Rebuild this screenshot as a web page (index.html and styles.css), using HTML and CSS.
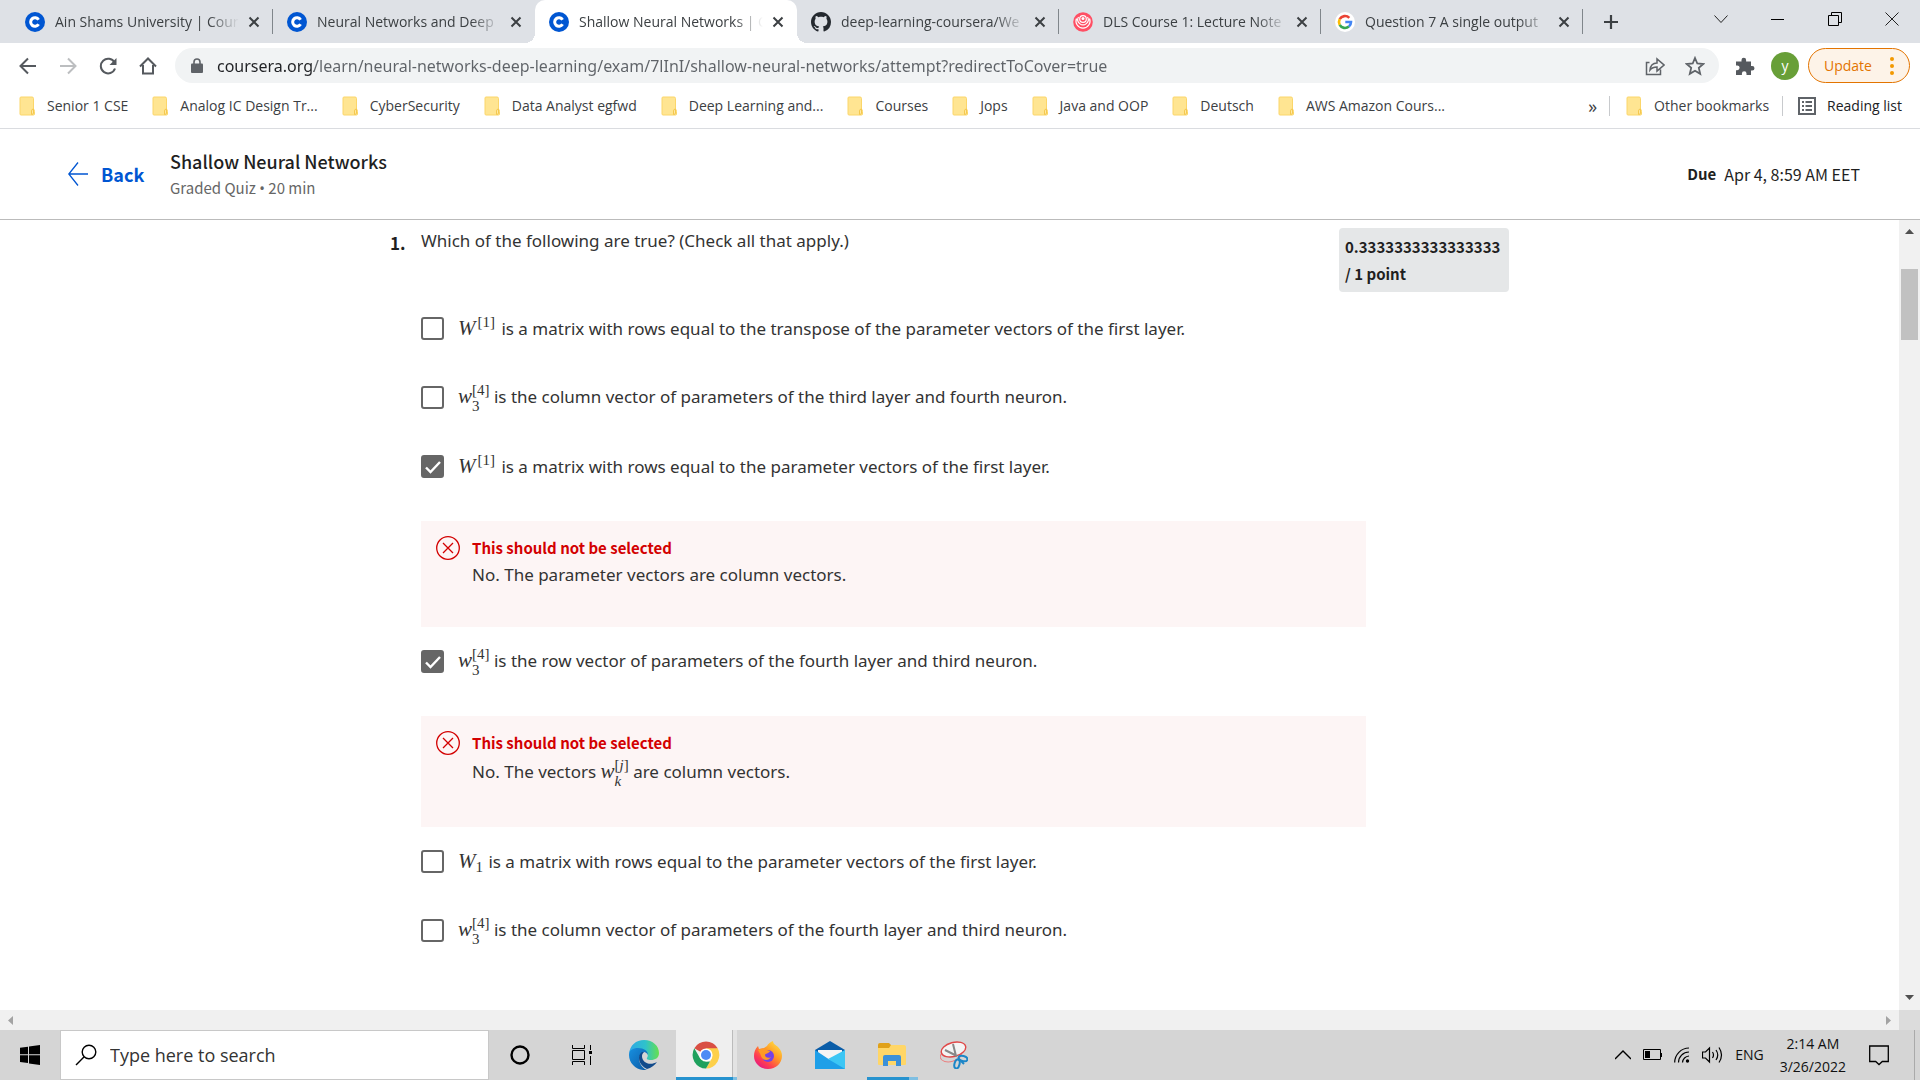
FILE: index.html
```html
<!DOCTYPE html>
<html lang="en">
<head>
<meta charset="utf-8">
<title>Shallow Neural Networks | Coursera</title>
<link rel="stylesheet" href="styles.css">
</head>
<body>
<svg class="defs" aria-hidden="true">
  <symbol id="coursera" viewBox="0 0 20 20"><circle cx="10" cy="10" r="10" fill="#0056d2"/><path d="M13.6 7.7A4.3 4.3 0 1 0 13.6 12.3" fill="none" stroke="#fff" stroke-width="3"/></symbol>
  <symbol id="close" viewBox="0 0 12 12"><path d="M1.5 1.5l9 9M10.500 1.500l-9 9" stroke="#3c4043" stroke-width="2" fill="none"/></symbol>
  <symbol id="folder" viewBox="0 0 16 20"><path d="M1 2q0-1 1-1h11q1.500 0 1.500 1.500V13q1 1 1 2.500v2.500q0 1-1 1H2q-1 0-1-1z" fill="#ffe592" stroke="#fbd66a"/><path d="M12.500 18.500v-3.500q0-2 2-2v4q0 1.500-2 1.500z" fill="#ffeaa5" stroke="#f5c84e"/></symbol>
  <symbol id="wrong" viewBox="0 0 24 24"><circle cx="12" cy="12" r="11.300" fill="none" stroke="#d30001" stroke-width="1.300"/><path d="M7 7l10 10M17 7L7 17" stroke="#d30001" stroke-width="1.300"/></symbol>
</svg>

<header class="browser">
  <nav class="tabs" aria-label="Tabs">
    <div class="tab"><svg class="fav"><use href="#coursera"/></svg><span class="tab-title">Ain Shams University | Cour</span><button class="tab-close" aria-label="Close tab"><svg><use href="#close"/></svg></button></div>
    <div class="tab no-line"><svg class="fav"><use href="#coursera"/></svg><span class="tab-title">Neural Networks and Deep</span><button class="tab-close" aria-label="Close tab"><svg><use href="#close"/></svg></button></div>
    <div class="tab active"><svg class="fav"><use href="#coursera"/></svg><span class="tab-title">Shallow Neural Networks | C</span><button class="tab-close" aria-label="Close tab"><svg><use href="#close"/></svg></button></div>
    <div class="tab"><svg class="fav" viewBox="0 0 16 16"><path fill="#24292f" d="M8 0C3.580 0 0 3.580 0 8c0 3.540 2.290 6.530 5.470 7.590.4.070.550-.170.550-.380 0-.190-.010-.820-.010-1.490-2.010.370-2.530-.490-2.690-.940-.090-.230-.480-.940-.820-1.130-.280-.150-.680-.520-.010-.530.630-.010 1.080.580 1.230.820.720 1.210 1.870.870 2.330.660.070-.520.280-.870.510-1.070-1.780-.200-3.640-.890-3.640-3.950 0-.870.310-1.590.820-2.150-.080-.200-.360-1.020.080-2.120 0 0 .670-.210 2.200.820.640-.180 1.320-.270 2-.270s1.360.090 2 .270c1.530-1.040 2.200-.820 2.200-.820.440 1.100.160 1.920.080 2.120.510.560.820 1.270.820 2.150 0 3.070-1.870 3.750-3.650 3.950.290.250.540.730.540 1.480 0 1.070-.010 1.930-.010 2.200 0 .210.150.460.550.380A8 8 0 0 0 16 8c0-4.420-3.580-8-8-8z"/></svg><span class="tab-title">deep-learning-coursera/We</span><button class="tab-close" aria-label="Close tab"><svg><use href="#close"/></svg></button></div>
    <div class="tab"><svg class="fav" viewBox="0 0 20 20"><circle cx="10" cy="10" r="9.800" fill="#ff4f64"/><g fill="none" stroke="#fff" stroke-width="1.200"><path d="M3.500 6.500a7 7 0 1 0 13 0"/><path d="M5.500 5a5.200 5.200 0 1 0 9 0"/><circle cx="10" cy="7" r="3.300"/></g><circle cx="10" cy="6.500" r="1.500" fill="#fff"/></svg><span class="tab-title">DLS Course 1: Lecture Note</span><button class="tab-close" aria-label="Close tab"><svg><use href="#close"/></svg></button></div>
    <div class="tab"><svg class="fav" viewBox="0 0 20 20"><circle cx="10" cy="10" r="10" fill="#fff"/><g fill="none" stroke-width="2.600"><path d="M14.300 5.900A6 6 0 0 0 4.700 7.200" stroke="#ea4335"/><path d="M4.700 7.200a6 6 0 0 0 0 5.600" stroke="#fbbc05"/><path d="M4.700 12.800a6 6 0 0 0 9.200 1.700" stroke="#34a853"/><path d="M13.900 14.500A6 6 0 0 0 16 10H10.300" stroke="#4285f4"/></g></svg><span class="tab-title">Question 7 A single output</span><button class="tab-close" aria-label="Close tab"><svg><use href="#close"/></svg></button></div>
    <button class="new-tab" aria-label="New tab"><svg width="16" height="16" viewBox="0 0 16 16"><path d="M8 1v14M1 8h14" stroke="#3c4043" stroke-width="2.200"/></svg></button>
    <div class="window-controls">
      <button aria-label="Search tabs"><svg width="14" height="14" viewBox="0 0 14 14"><path d="M.5 3.500L7 10.500l6.500-7" fill="none" stroke="#222"/></svg></button>
      <button aria-label="Minimize"><svg width="14" height="14" viewBox="0 0 14 14"><path d="M0 7.500h13" stroke="#000"/></svg></button>
      <button aria-label="Restore"><svg width="14" height="14" viewBox="0 0 14 14"><path d="M.5 3.500h10v10H.5zM3.500 3.500v-3h10v10h-3" fill="none" stroke="#000"/></svg></button>
      <button aria-label="Close window"><svg width="14" height="14" viewBox="0 0 14 14"><path d="M.5.500l13 13M13.500.500l-13 13" stroke="#222"/></svg></button>
    </div>
  </nav>

  <div class="toolbar">
    <button class="tool" aria-label="Back"><svg width="18" height="18" viewBox="0 0 18 18"><path d="M17 9H2M9 1.500L1.500 9 9 16.500" fill="none" stroke="#55595e" stroke-width="2"/></svg></button>
    <button class="tool" aria-label="Forward"><svg width="18" height="18" viewBox="0 0 18 18"><path d="M1 9h15M9 1.500L16.500 9 9 16.500" fill="none" stroke="#bcbec0" stroke-width="2"/></svg></button>
    <button class="tool" aria-label="Reload"><svg width="18" height="18" viewBox="0 0 18 18"><path d="M15.500 5.500A7.300 7.300 0 1 0 16 11.500" fill="none" stroke="#55595e" stroke-width="2"/><path d="M17.500 1v7h-7z" fill="#55595e"/></svg></button>
    <button class="tool" aria-label="Home"><svg width="18" height="18" viewBox="0 0 18 18"><path d="M1 9.500L9 1.500l8 8M4 8v8.500h10V8" fill="none" stroke="#55595e" stroke-width="2"/></svg></button>
    <div class="omnibox">
      <svg width="12" height="16" viewBox="0 0 12 16"><rect x="0" y="5.500" width="12" height="9.500" rx="1" fill="#5f6368"/><path d="M3 6V4a3 3 0 0 1 6 0v2" fill="none" stroke="#5f6368" stroke-width="1.600"/></svg>
      <input class="url" type="text" aria-label="Address" value="coursera.org/learn/neural-networks-deep-learning/exam/7lInI/shallow-neural-networks/attempt?redirectToCover=true">
      <button aria-label="Share"><svg width="20" height="20" viewBox="0 0 20 20"><path d="M4.500 6.500H1.500v12h14v-5M5 14c.5-5 3-7 7-7V3l7 6-7 6v-4c-3 0-5 .5-7 3z" fill="none" stroke="#5f6368" stroke-width="1.500"/></svg></button>
      <button aria-label="Bookmark"><svg width="20" height="20" viewBox="0 0 20 20"><path d="M10 2l2.300 5.500 6 .5-4.500 3.900 1.400 5.900L10 14.700l-5.200 3.100 1.400-5.900L1.700 8l6-.5z" fill="none" stroke="#5f6368" stroke-width="1.800"/></svg></button>
    </div>
    <button class="tool ext" aria-label="Extensions"><svg width="20" height="20" viewBox="0 0 20 20"><path d="M1 5.500h5.500V4a2.300 2.300 0 0 1 4.600 0v1.500H16V10h1.200a2.300 2.300 0 0 1 0 4.600H16V19h-4.500v-1.500a2.300 2.300 0 0 0-4.600 0V19H1v-4.800h1.200a2.400 2.400 0 0 0 0-4.800H1z" fill="#55595e"/></svg></button>
    <button class="avatar" aria-label="Profile">y</button>
    <button class="update">Update <svg width="4" height="20" viewBox="0 0 4 20"><g fill="#f29900"><circle cx="2" cy="3" r="2"/><circle cx="2" cy="10" r="2"/><circle cx="2" cy="17" r="2"/></g></svg></button>
  </div>

  <nav class="bookmarks" aria-label="Bookmarks">
    <a href="#"><svg><use href="#folder"/></svg>Senior 1 CSE</a>
    <a href="#"><svg><use href="#folder"/></svg>Analog IC Design Tr...</a>
    <a href="#"><svg><use href="#folder"/></svg>CyberSecurity</a>
    <a href="#"><svg><use href="#folder"/></svg>Data Analyst egfwd</a>
    <a href="#"><svg><use href="#folder"/></svg>Deep Learning and...</a>
    <a href="#"><svg><use href="#folder"/></svg>Courses</a>
    <a href="#"><svg><use href="#folder"/></svg>Jops</a>
    <a href="#"><svg><use href="#folder"/></svg>Java and OOP</a>
    <a href="#"><svg><use href="#folder"/></svg>Deutsch</a>
    <a href="#"><svg><use href="#folder"/></svg>AWS Amazon Cours...</a>
    <button class="more" aria-label="More bookmarks">»</button>
    <a class="side" href="#"><svg><use href="#folder"/></svg>Other bookmarks</a>
    <a class="side list" href="#"><svg viewBox="0 0 18 20"><rect x="1" y="2" width="16" height="16" fill="none" stroke="#5f6368" stroke-width="2"/><path d="M4 6h2M4 10h2M4 14h2M7.500 6H14M7.500 10H14M7.500 14H14" stroke="#5f6368" stroke-width="2"/></svg>Reading list</a>
  </nav>
</header>

<header class="quiz-header">
  <a class="back" href="#"><svg width="20" height="24" viewBox="0 0 20 24"><path d="M20 12H1M10 .5L.8 12l9.200 11.500" fill="none" stroke="#0056d2" stroke-width="1.300"/></svg>Back</a>
  <div class="quiz-name">
    <h1>Shallow Neural Networks</h1>
    <p>Graded Quiz <span class="dot">•</span> 20 min</p>
  </div>
  <p class="due"><b>Due</b>Apr 4, 8:59 AM EET</p>
</header>

<div class="viewport">
  <main class="quiz">
    <div class="question">
      <span class="number">1.</span>
      <h2>Which of the following are true? (Check all that apply.)</h2>
      <p class="score">0.3333333333333333<br>/ 1 point</p>
    </div>
    <div class="options">
      <label class="option"><input type="checkbox"><span><i class="var">W</i><sup>[1]</sup> is a matrix with rows equal to the transpose of the parameter vectors of the first layer.</span></label>
      <label class="option"><input type="checkbox"><span><i class="var">w</i><span class="stack"><span>[4]</span><span>3</span></span> is the column vector of parameters of the third layer and fourth neuron.</span></label>
      <label class="option"><input type="checkbox" checked><span><i class="var">W</i><sup>[1]</sup> is a matrix with rows equal to the parameter vectors of the first layer.</span></label>
      <section class="feedback">
        <svg width="24" height="24"><use href="#wrong"/></svg>
        <div><h3>This should not be selected</h3><p>No. The parameter vectors are column vectors.</p></div>
      </section>
      <label class="option"><input type="checkbox" checked><span><i class="var">w</i><span class="stack"><span>[4]</span><span>3</span></span> is the row vector of parameters of the fourth layer and third neuron.</span></label>
      <section class="feedback">
        <svg width="24" height="24"><use href="#wrong"/></svg>
        <div><h3>This should not be selected</h3><p class="tall">No. The vectors <i class="var">w</i><span class="stack"><span>[<i>j</i>]</span><i>k</i></span> are column vectors.</p></div>
      </section>
      <label class="option"><input type="checkbox"><span><i class="var">W</i><sub>1</sub> is a matrix with rows equal to the parameter vectors of the first layer.</span></label>
      <label class="option"><input type="checkbox"><span><i class="var">w</i><span class="stack"><span>[4]</span><span>3</span></span> is the column vector of parameters of the fourth layer and third neuron.</span></label>
    </div>
  </main>
  <div class="scroll-v"><svg width="9" height="5" viewBox="0 0 9 5"><path d="M0 5L4.500 0 9 5z" fill="#505050"/></svg><div class="thumb"></div><svg width="9" height="5" viewBox="0 0 9 5"><path d="M0 0l4.500 5L9 0z" fill="#505050"/></svg></div>
</div>
<div class="scroll-h">
  <div class="track"><svg width="5" height="9" viewBox="0 0 5 9"><path d="M5 0L0 4.500 5 9z" fill="#a3a3a3"/></svg><svg width="5" height="9" viewBox="0 0 5 9"><path d="M0 0l5 4.500L0 9z" fill="#a3a3a3"/></svg></div>
  <div class="corner"></div>
</div>

<footer class="taskbar">
  <button class="start" aria-label="Start"><svg width="20" height="20" viewBox="0 0 20 20"><path d="M0 2.800L8 1.700V9.300H0zM9 1.500L20 0v9.300H9zM0 10.200h8v7.900l-8-1zM9 10.200h11V20L9 18.400z"/></svg></button>
  <div class="search">
    <svg width="22" height="22" viewBox="0 0 22 22"><circle cx="14" cy="8" r="6.800" fill="none" stroke="#000" stroke-width="1.400"/><path d="M9.200 12.800L1 21" stroke="#000" stroke-width="1.400"/></svg>
    <input type="text" aria-label="Search" placeholder="Type here to search">
  </div>
  <button class="app" aria-label="Cortana"><svg width="20" height="20" viewBox="0 0 20 20"><circle cx="10" cy="10" r="8.500" fill="none" stroke="#000" stroke-width="2.400"/></svg></button>
  <button class="app" aria-label="Task view"><svg width="20" height="20" viewBox="0 0 20 20"><path d="M.5 5.500h12v9H.5zM.5 0v3.500h12V0M.5 20v-3.500h12V20M18.500 0v5M18.500 11v9" fill="none" stroke="#000"/><path d="M17 6h3v3h-3z"/></svg></button>
  <button class="app" aria-label="Edge"><svg width="30" height="30" viewBox="0 0 30 30"><defs><linearGradient id="e1" x1="0" x2="1"><stop offset="0" stop-color="#2ea8e6"/><stop offset=".55" stop-color="#2fc2cb"/><stop offset="1" stop-color="#66e04e"/></linearGradient><linearGradient id="e2" x1="0" y1="0" x2="1" y2="1"><stop offset="0" stop-color="#1790e0"/><stop offset="1" stop-color="#0c59a4"/></linearGradient></defs><path d="M0 14C1 5 7 0 15 0c9 0 15 6 15 13 0 5-4 7-8 7-4 0-5-1-3.500-3C20 13 16 10 12 10 6 9 1 11 0 14z" fill="url(#e1)"/><path d="M0 15c0-5 4-7 9-7 6 0 10 3 10 7-1-2-3-3-4-3-4 2-6 6-4 11 1 3 4 6 7 7C8 31 0 24 0 15z" fill="url(#e2)"/><path d="M13 12c-5 3-4 13 5 17 4-1 8-4 10-7-7 4-15 1-15-6 0-2 1-3 2-4z" fill="#114a8b"/></svg></button>
  <button class="app running current" aria-label="Chrome"><svg width="28" height="28" viewBox="0 0 28 28"><path d="M14 14L2.300 7.200A13.600 13.600 0 0 1 25.700 7.200z" fill="#d94f43"/><path d="M25.700 7.300A13.700 13.700 0 0 1 14 27.600l5.800-10.200L14 7.300z" fill="#fdd04b"/><path d="M14 27.600A13.700 13.700 0 0 1 2.300 7.200L8.200 17.400 14 20.500h4z" fill="#1fa15d"/><circle cx="14" cy="14" r="6.600" fill="#fff"/><circle cx="14" cy="14" r="5" fill="#4c8bf5"/></svg></button>
  <button class="app" aria-label="Firefox"><svg width="28" height="28" viewBox="0 0 28 28"><defs><linearGradient id="f1" x1="1" y1="0" x2=".2" y2="1"><stop offset="0" stop-color="#fff14a"/><stop offset=".45" stop-color="#ff9a25"/><stop offset=".75" stop-color="#ff3f50"/><stop offset="1" stop-color="#e31587"/></linearGradient></defs><path d="M14 28C6 28 0 22 0 15c0-4 1-7 4-10l1 3 5-1 3-2c1-2 3-4 6-5 0 3 3 4 5 6 3 3 4 6 4 9 0 7-6 13-14 13z" fill="url(#f1)"/><circle cx="14" cy="15" r="6" fill="#7542e5"/><path d="M4 9c3-2 6-2 9 0l3 1c-1 3-5 2-5 4s3 4 6 2c-3 5-9 3-10-1-1-3-2-4-3-6z" fill="#ff9a25"/></svg></button>
  <button class="app" aria-label="Mail"><svg width="30" height="28" viewBox="0 0 30 28"><path d="M0 9L15 0l15 9v4H0z" fill="#0a5da8"/><path d="M3 9h24v8l-12 5-12-5z" fill="#f4f4f4"/><path d="M0 9l15 10L30 9v19H0z" fill="#1e9fe8"/><path d="M30 9L13 18l17 10z" fill="#3cc6f4"/></svg></button>
  <button class="app running" aria-label="File Explorer"><svg width="28" height="24" viewBox="0 0 28 24"><path d="M0 2q0-2 2-2h9l3 3-2 4H0z" fill="#e0a11a"/><path d="M0 5h11l2-3h13q2 0 2 2v17q0 1-1 1H1q-1 0-1-1z" fill="#ffd667"/><path d="M5 14q0-2 2-2h14q2 0 2 2v9h-5v-5h-8v5H5z" fill="#3c90d8"/></svg></button>
  <button class="app" aria-label="Snipping Tool"><svg width="28" height="28" viewBox="0 0 28 28"><g fill="none"><ellipse cx="11" cy="14" rx="11" ry="6.500" stroke="#ea8080" transform="rotate(-15 11 14)"/><ellipse cx="13.500" cy="8.500" rx="12.500" ry="7" fill="#f4f4f4" stroke="#e04848" stroke-width="1.400" transform="rotate(-15 13.500 8.500)"/><path d="M13 3l3 12M5 9l12 6" stroke="#888" stroke-width="2"/><ellipse cx="23" cy="17.500" rx="4.500" ry="2.500" stroke="#1c86c8" stroke-width="2" transform="rotate(15 23 17.500)"/><ellipse cx="17" cy="23" rx="2.500" ry="4.500" stroke="#1c86c8" stroke-width="2" transform="rotate(15 17 23)"/><path d="M19 18l5 5" stroke="#1c86c8" stroke-width="2"/></g></svg></button>
  <div class="tray">
    <svg width="16" height="16" viewBox="0 0 16 16"><path d="M0 12l8-8 8 8" fill="none" stroke="#000" stroke-width="1.400"/></svg>
    <svg width="19" height="12" viewBox="0 0 19 12"><path d="M.5.500h17v10H.5zM18.500 4v4" fill="none" stroke="#000"/><path d="M2 2h5v7H2z"/></svg>
    <svg width="16" height="16" viewBox="0 0 16 16"><path d="M.7 15.500A14.500 14.500 0 0 1 15 1M4.500 15.500A10.500 10.500 0 0 1 15 5M8.500 15.500A7 7 0 0 1 15 9" fill="none" stroke="#000" stroke-width="1.200"/><circle cx="13.500" cy="14" r="1.700"/></svg>
    <svg width="21" height="18" viewBox="0 0 21 18"><path d="M.5 6h3l4-4v14l-4-4h-3zM10.500 6q2 3 0 6M14 4q3.500 5 0 10M17 1.500q5 7.500 0 15" fill="none" stroke="#000" stroke-width="1.200"/></svg>
    <span>ENG</span>
    <time>2:14 AM<br>3/26/2022</time>
    <svg width="20" height="21" viewBox="0 0 20 21"><path d="M.7 1h18.600v15.500h-6L10 19.500l-3.300-3H.7z" fill="none" stroke="#000" stroke-width="1.300"/></svg>
  </div>
</footer>
</body>
</html>
```
FILE: styles.css
```css
* { box-sizing: border-box; }

body {
  margin: 0;
  min-height: 100vh;
  display: flex;
  flex-direction: column;
  background: #fff;
  color: #3c4043;
  font: 14px/20px "Open Sans", "Noto Sans", sans-serif;
}

h1, h2, h3, p { margin: 0; font-weight: 400; }
a { color: inherit; text-decoration: none; }
button { margin: 0; padding: 0; border: 0; background: none; color: inherit; font: inherit; display: grid; place-items: center; flex: none; }
input { margin: 0; padding: 0; border: 0; background: none; font: inherit; outline: 0; }
svg { flex: none; display: block; }
.defs { position: absolute; width: 0; height: 0; }

/* Tab strip */
.tabs { display: flex; height: 43px; padding-left: 11px; background: #dee1e6; }
.tab { position: relative; flex: 0 1 262px; min-width: 0; display: flex; align-items: center; padding: 0 13px 0 14px; }
.tab::after { content: ""; position: absolute; right: 0; top: 9px; width: 1px; height: 25px; background: #80868b; }
.tab.no-line::after, .tab.active::after { display: none; }
.tab.active { background: #fff; border-radius: 10px 10px 0 0; }
.tab.active::before { content: ""; position: absolute; inset: auto -10px 0; height: 10px; background: radial-gradient(circle at 0 0, transparent 10px, #fff 10px) left / 10px 10px no-repeat, radial-gradient(circle at 100% 0, transparent 10px, #fff 10px) right / 10px 10px no-repeat; }
.fav { width: 20px; height: 20px; margin-right: 10px; }
.tab-title { flex: 1; min-width: 0; overflow: hidden; white-space: nowrap; -webkit-mask: linear-gradient(to left, transparent, #000 30px); mask: linear-gradient(to left, transparent, #000 30px); }
.tab-close { width: 12px; height: 12px; margin-left: 9px; }
.tab-close svg { width: 12px; height: 12px; }
.new-tab { width: 56px; }
.window-controls { display: flex; margin-left: auto; padding-bottom: 6px; }
.window-controls button { width: 57px; }

/* Toolbar */
.toolbar { display: flex; align-items: center; height: 45px; padding: 0 10px 0 8px; }
.tool { width: 40px; height: 36px; }
.omnibox { flex: 1; min-width: 0; display: flex; align-items: center; height: 35px; margin-left: 7px; padding: 0 14px 0 16px; border-radius: 18px; background: #f1f3f4; }
.url { flex: 1; min-width: 0; height: 24px; margin: 0 12px 0 14px; font: 16px/24px "Noto Sans", "Open Sans", sans-serif; color: #5f6368; background: linear-gradient(to right, #202124 97px, #5f6368 97px); background-clip: text; -webkit-background-clip: text; -webkit-text-fill-color: transparent; }
.omnibox button { width: 20px; height: 20px; margin-left: 20px; }
.ext { width: 52px; }
.avatar { width: 28px; height: 28px; border-radius: 50%; background: #689f38; color: #fff; }
.update { display: flex; align-items: center; justify-content: space-between; width: 102px; height: 35px; margin-left: 9px; padding: 0 15px; border: 1px solid #e37400; border-radius: 18px; background: #fdf3e8; color: #e37400; }

/* Bookmarks */
.bookmarks { display: flex; align-items: center; height: 41px; padding: 0 18px 4px 19px; border-bottom: 1px solid #dadce0; white-space: nowrap; }
.bookmarks a { display: flex; align-items: center; gap: 12px; margin-right: 24px; }
.bookmarks svg { width: 16px; height: 20px; }
.bookmarks .more { margin-left: auto; margin-right: 12px; font-size: 18px; }
.bookmarks .side { padding-left: 16px; border-left: 1px solid #c8cacd; margin-right: 13px; }
.bookmarks .list { gap: 11px; padding-left: 15px; margin-right: 0; color: #202124; }
.bookmarks .list svg { width: 18px; height: 20px; }

/* Quiz header */
.quiz-header { display: flex; align-items: center; height: 91px; padding: 0 60px 0 68px; border-bottom: 1px solid #bbb; font-family: "Noto Sans CJK SC", "Noto Sans", sans-serif; color: #1f1f1f; }
.back { display: flex; align-items: center; gap: 13px; width: 102px; font-size: 18px; font-weight: 700; color: #0056d2; }
.quiz-name h1 { font-size: 18px; line-height: 28px; font-weight: 500; }
.quiz-name p { font-size: 15px; line-height: 26px; color: #666; }
.dot { font-family: "Noto Sans", sans-serif; }
.due { margin-left: auto; display: flex; gap: 8px; font-size: 16px; }
.due b { font-size: 15px; }

/* Quiz body */
.viewport { flex: 1; display: flex; }
.quiz { flex: 1; min-width: 0; max-width: 1119px; margin: 0 auto; padding: 8px 0 44px; color: #333; font: 17px/26px "Noto Sans", "Open Sans", sans-serif; }
.question { display: flex; }
.number { width: 31px; font: 700 17px/30px "Noto Sans CJK SC", "Noto Sans", sans-serif; color: #1f1f1f; }
.question h2 { flex: 1; font-size: 17px; }
.score { width: 170px; height: 64px; padding: 5px 6px; border-radius: 4px; background: #e5e7e8; color: #1f1f1f; font: 700 15px/27px "Noto Sans CJK SC", "Noto Sans", sans-serif; }
.options { max-width: 945px; margin: 2px 0 0 31px; }
.option { display: flex; align-items: center; gap: 14px; height: 69px; }
.option input { appearance: none; -webkit-appearance: none; flex: none; width: 23px; height: 23px; border: 2px solid #666; border-radius: 3px; background: #fff; }
.option input:checked { background: #666 url("data:image/svg+xml,%3Csvg xmlns='http://www.w3.org/2000/svg' viewBox='0 0 18 18'%3E%3Cpath d='M2 9.500l4.500 4.500L16 4' fill='none' stroke='white' stroke-width='2.400'/%3E%3C/svg%3E") center / 18px 18px no-repeat; }
.feedback { display: flex; gap: 12px; margin-top: 20px; padding: 13px 15px 39px; background: #fdf5f5; }
.feedback svg { margin-top: 2px; }
.feedback h3 { font: 700 15px/27px "Noto Sans CJK SC", "Noto Sans", sans-serif; color: #d30001; }
.feedback p { height: 27px; line-height: 27px; }
.feedback .tall { height: 32px; line-height: 32px; }

/* Inline maths */
.var, .stack, sup, sub { font-family: "Liberation Serif", serif; }
.var { font-size: 21px; line-height: 20px; }
sup, sub, .stack { font-size: 15px; line-height: 0; margin: 0 2px 0 2px; }
sup { vertical-align: 8px; }
sub { vertical-align: -4px; margin: 0 1px 0 0; }
.stack { display: inline-grid; grid-auto-rows: 16px; margin: 0; line-height: 16px; vertical-align: middle; }

/* Scroll bars */
.scroll-v { flex: none; width: 21px; display: flex; flex-direction: column; align-items: center; padding: 9px 0 10px; background: #f1f1f1; }
.thumb { width: 17px; height: 71px; margin: 35px 0 auto; background: #c1c1c1; }
.scroll-h { display: flex; height: 20px; }
.track { flex: 1; display: flex; align-items: center; justify-content: space-between; padding: 0 8px; background: #f0f0f0; }
.corner { width: 21px; background: #dcdcdc; }

/* Taskbar */
.taskbar { display: flex; height: 50px; background: #d5d5d5; color: #111; }
.start { width: 60px; }
.search { flex: 0 1 429px; display: flex; align-items: center; gap: 13px; padding: 0 14px; background: #fff; border: 1px solid #c8c8c8; }
.search input { flex: 1; min-width: 0; font-size: 18px; line-height: 26px; }
.search input::placeholder { color: #333; opacity: 1; }
.app { width: 62px; position: relative; }
.running::after { content: ""; position: absolute; inset: auto 5px 0 6px; height: 3px; background: linear-gradient(to right, #2793cf 42px, #7fbfe2 42px); }
.current { background: linear-gradient(to right, #efefef 56px, #bbb 56px 57px, #e3e3e3 57px) 1px 0 / 61px 100% no-repeat; }
.current::after { inset: auto 0 0 1px; background: linear-gradient(to right, #2793cf 57px, #7fbfe2 57px); }
.tray { display: flex; align-items: center; margin-left: auto; margin-right: 5px; padding-right: 25px; gap: 12px; border-right: 1px solid #aaa; }
.tray time { text-align: center; line-height: 23px; margin: 0 11px 0 4px; }
```
